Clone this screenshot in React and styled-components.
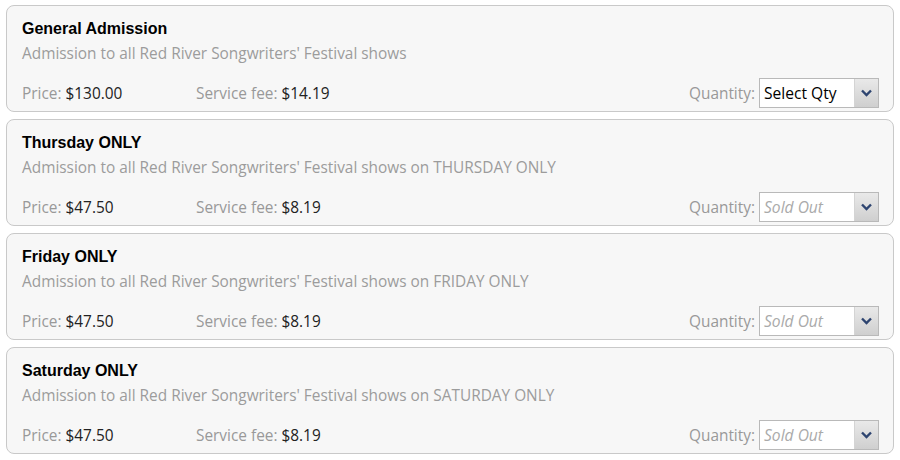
import React from "react";
import styled, { createGlobalStyle } from "styled-components";

const GlobalStyle = createGlobalStyle`
  body {
    margin: 0;
    padding: 5px 6px;
    background: #ffffff;
    font-family: "Open Sans", "Liberation Sans", sans-serif;
  }
`;

const List = styled.div`
  display: flex;
  flex-direction: column;
  gap: 7px;
`;

const Card = styled.div`
  height: 107px;
  box-sizing: border-box;
  border: 1px solid #c9c9c9;
  border-radius: 8px;
  background: #f7f7f7;
  padding: 11px 14px 0 15px;
  display: flex;
  flex-direction: column;
`;

const Title = styled.div`
  font-family: "Liberation Sans", Arial, sans-serif;
  font-weight: bold;
  font-size: 16px;
  color: #000;
  line-height: 24px;
`;

const Description = styled.div`
  font-size: 15.4px;
  color: #9c9c9c;
  line-height: 20px;
  margin-top: 3px;
`;

const Row = styled.div`
  display: flex;
  align-items: center;
  margin-top: auto;
  margin-bottom: 3px;
  font-size: 15.4px;
`;

const Field = styled.div`
  width: ${({ w }) => w}px;
  color: #999;
`;

const Value = styled.span`
  color: #222;
`;

const QtyLabel = styled.span`
  margin-left: auto;
  color: #999;
  margin-right: 4px;
`;

const SelectBox = styled.div`
  width: 120px;
  height: 30px;
  box-sizing: border-box;
  border: 1px solid #b9b9b9;
  background: #fff;
  display: flex;
  align-items: center;
`;

const SelectText = styled.div`
  flex: 1;
  padding-left: 4px;
  font-size: 15.6px;
  color: ${({ disabled }) => (disabled ? "#aaa" : "#000")};
  font-style: ${({ disabled }) => (disabled ? "italic" : "normal")};
`;

const Arrow = styled.div`
  width: 23px;
  height: 100%;
  border-left: 1px solid #d4d4d4;
  background: linear-gradient(#e9e9e9, #cfcfcf);
  display: flex;
  align-items: center;
  justify-content: center;
`;

const tickets = [
  { name: "General Admission", desc: "Admission to all Red River Songwriters' Festival shows", price: "$130.00", fee: "$14.19", soldOut: false },
  { name: "Thursday ONLY", desc: "Admission to all Red River Songwriters' Festival shows on THURSDAY ONLY", price: "$47.50", fee: "$8.19", soldOut: true },
  { name: "Friday ONLY", desc: "Admission to all Red River Songwriters' Festival shows on FRIDAY ONLY", price: "$47.50", fee: "$8.19", soldOut: true },
  { name: "Saturday ONLY", desc: "Admission to all Red River Songwriters' Festival shows on SATURDAY ONLY", price: "$47.50", fee: "$8.19", soldOut: true },
];

const Chevron = () => (
  <svg width="11" height="8" viewBox="0 0 11 8">
    <path d="M1 1.5 L5.5 6 L10 1.5" fill="none" stroke="#2d4470" strokeWidth="2.4" />
  </svg>
);

const App = () => (
  <>
    <GlobalStyle />
    <List>
      {tickets.map((t) => (
        <Card key={t.name}>
          <Title>{t.name}</Title>
          <Description>{t.desc}</Description>
          <Row>
            <Field w={174}>
              Price: <Value>{t.price}</Value>
            </Field>
            <Field w={200}>
              Service fee: <Value>{t.fee}</Value>
            </Field>
            <QtyLabel>Quantity:</QtyLabel>
            <SelectBox>
              <SelectText disabled={t.soldOut}>{t.soldOut ? "Sold Out" : "Select Qty"}</SelectText>
              <Arrow>
                <Chevron />
              </Arrow>
            </SelectBox>
          </Row>
        </Card>
      ))}
    </List>
  </>
);

export default App;
